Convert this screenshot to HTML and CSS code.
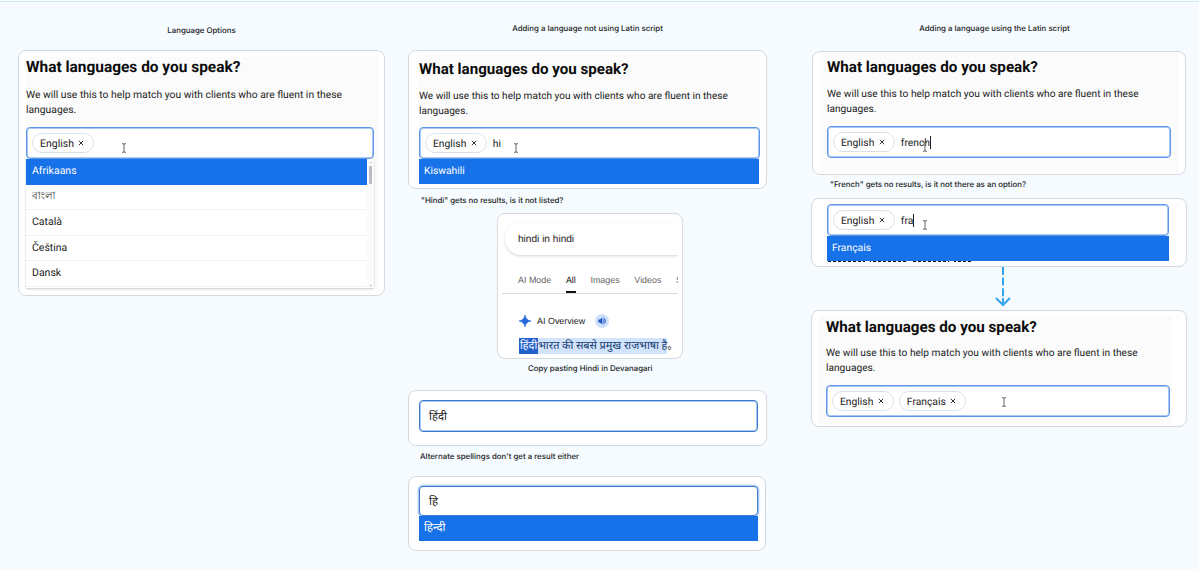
FILE: index.html
```html
<!DOCTYPE html>
<html lang="en">

<head>
    <meta charset="UTF-8">
    <meta name="viewport" content="width=device-width, initial-scale=1.0">
    <title>Language Options</title>
    <link rel="stylesheet" href="styles.css">
</head>

<body>
    <svg class="defs" width="0" height="0">
        <symbol id="ibeam" viewBox="0 0 6 10">
            <path d="M1 .7h1.2q.8 0 .8.8v7q0 .8-.8.8H1M5 .7H3.8q-.8 0-.8.8M5 9.3H3.8q-.8 0-.8-.8" fill="none" stroke="#555" stroke-width=".9" />
        </symbol>
        <symbol id="close" viewBox="0 0 6 6">
            <path d="M.8.8l4.4 4.4M5.2.8L.8 5.2" fill="none" stroke="#333" stroke-width="1" />
        </symbol>
    </svg>

    <main class="board">
        <section class="column column-options">
            <h1 class="caption">Language Options</h1>
            <div class="card card-options">
                <div class="panel">
                    <h2>What languages do you speak?</h2>
                    <p>We will use this to help match you with clients who are fluent in these languages.</p>
                    <div class="field">
                        <span class="tag">English <svg><use href="#close" /></svg></span>
                        <svg class="ibeam"><use href="#ibeam" /></svg>
                    </div>
                    <div class="dropdown">
                        <ul class="list">
                            <li class="active">Afrikaans</li>
                            <li class="bengali">বাংলা</li>
                            <li>Català</li>
                            <li>Čeština</li>
                            <li>Dansk</li>
                        </ul>
                        <div class="scrollbar">
                            <i class="arrow up"></i>
                            <i class="thumb"></i>
                            <i class="arrow down"></i>
                        </div>
                    </div>
                </div>
            </div>
        </section>

        <section class="column column-other">
            <h1 class="caption">Adding a language not using Latin script</h1>
            <div class="card card-hi">
                <div class="panel">
                    <h2>What languages do you speak?</h2>
                    <p>We will use this to help match you with clients who are fluent in these languages.</p>
                    <div class="field">
                        <span class="tag">English <svg><use href="#close" /></svg></span>
                        <span class="typed">hi</span>
                        <svg class="ibeam"><use href="#ibeam" /></svg>
                    </div>
                    <div class="option active">Kiswahili</div>
                </div>
            </div>
            <p class="note note-hi">"Hindi" gets no results, is it not listed?</p>
            <div class="card search">
                <div class="search-bar">hindi in hindi</div>
                <div class="tabs">
                    <span>AI Mode</span>
                    <span class="selected">All</span>
                    <span>Images</span>
                    <span>Videos</span>
                    <span>S</span>
                </div>
                <div class="overview">
                    <svg class="spark" viewBox="0 0 12 12"><path d="M6 0Q6.8 5.2 12 6Q6.8 6.8 6 12Q5.2 6.8 0 6Q5.2 5.2 6 0Z" fill="#2b6be0" stroke="#2b6be0" stroke-width=".6" /></svg>
                    <span>AI Overview</span>
                    <svg class="speaker" viewBox="0 0 14 14">
                        <circle cx="7" cy="7" r="7" fill="#cfe0fc" />
                        <path d="M3.3 5.6h1.6L7.3 3.5v7L4.9 8.4H3.3z" fill="#1b56c4" />
                        <path d="M8.3 5.2q1.4 1.8 0 3.6M8.6 3.6q3.6 3.4 0 6.8" fill="none" stroke="#1b56c4" stroke-width=".9" />
                    </svg>
                </div>
                <div class="answer"><mark>हिंदी</mark><span>भारत की सबसे प्रमुख राजभाषा है</span>。</div>
            </div>
            <p class="note note-copy">Copy pasting Hindi in Devanagari</p>
            <div class="card card-paste">
                <div class="field">हिंदी</div>
            </div>
            <p class="note note-alt">Alternate spellings don't get a result either</p>
            <div class="card card-match">
                <div class="field">हि</div>
                <div class="option active">हिन्दी</div>
            </div>
        </section>

        <section class="column column-latin">
            <h1 class="caption">Adding a language using the Latin script</h1>
            <div class="card card-french">
                <div class="panel">
                    <h2>What languages do you speak?</h2>
                    <p>We will use this to help match you with clients who are fluent in these languages.</p>
                    <div class="field">
                        <span class="tag">English <svg><use href="#close" /></svg></span>
                        <span class="typed caret">french</span>
                        <svg class="ibeam"><use href="#ibeam" /></svg>
                    </div>
                </div>
            </div>
            <p class="note note-french">"French" gets no results, is it not there as an option?</p>
            <div class="card card-fra">
                <div class="field">
                    <span class="tag">English <svg><use href="#close" /></svg></span>
                    <span class="typed caret">fra</span>
                    <svg class="ibeam"><use href="#ibeam" /></svg>
                </div>
                <div class="option active">Français</div>
                <div class="covered"></div>
            </div>
            <svg class="flow-arrow" viewBox="0 0 16 42">
                <path d="M8 0V34" stroke-dasharray="8 2.6" />
                <path d="M8 31V37.5M1 31L8 38L15 31" />
            </svg>
            <div class="card card-done">
                <div class="panel">
                    <h2>What languages do you speak?</h2>
                    <p>We will use this to help match you with clients who are fluent in these languages.</p>
                    <div class="field">
                        <span class="tag">English <svg><use href="#close" /></svg></span>
                        <span class="tag">Français <svg><use href="#close" /></svg></span>
                        <svg class="ibeam"><use href="#ibeam" /></svg>
                    </div>
                </div>
            </div>
        </section>
    </main>
</body>

</html>
```

FILE: styles.css
```css
* {
    box-sizing: border-box;
}

body {
    margin: 0;
    height: 569px;
    overflow: hidden;
    background-color: #f5fbff;
    color: #222;
    font-family: Roboto, "Noto Sans", sans-serif;
    font-size: 10.3px;
    text-rendering: geometricPrecision;
}

h1,
h2,
p,
ul {
    margin: 0;
    padding: 0;
}

.defs {
    position: absolute;
}

.board {
    display: flex;
    align-items: flex-start;
    height: 569px;
    margin-top: 1px;
    padding-left: 18px;
    border-top: 1px solid #cbe9ee;
}

.column {
    display: flex;
    flex-direction: column;
}

.column-options {
    width: 367px;
    margin-right: 23px;
}

.column-other {
    width: 359px;
    margin-right: 44px;
}

.column-latin {
    width: 376px;
}

.caption,
.note {
    color: #222;
    font-family: Inter, sans-serif;
    font-size: 7.85px;
    font-weight: 500;
    line-height: 12px;
}

.caption {
    height: 28px;
    margin-top: 20px;
    text-align: center;
}

.column-options .caption {
    height: 26px;
    margin-top: 22px;
}

.column-latin .caption {
    margin-right: 9px;
}

.card {
    border: 1px solid #d5d9de;
    border-radius: 8px;
    background-color: #fff;
    overflow: hidden;
}

.panel {
    background-color: #fbfbfb;
}

h2 {
    color: #0c0c0c;
    font-size: 15.2px;
    font-weight: 700;
    line-height: 20px;
    white-space: nowrap;
}

.panel p {
    height: 30px;
    font-size: 10.18px;
    line-height: 15px;
}

.field {
    display: flex;
    align-items: center;
    height: 32px;
    padding-left: 5px;
    border: 1px solid #5c97e6;
    border-radius: 4px;
    background-color: #fff;
    box-shadow: inset 0 0 0 1px #a9c9f3;
}

.tag {
    display: flex;
    align-items: center;
    height: 20px;
    padding: 0 9px 0 7px;
    border: 1px solid #dcdfe6;
    border-radius: 10px;
}

.tag svg {
    width: 6px;
    height: 6px;
    margin-left: 4.5px;
}

.tag + .tag {
    margin-left: 5px;
}

.typed {
    margin-left: 6px;
}

.caret {
    border-right: 1px solid #222;
}

.ibeam {
    width: 6px;
    height: 10px;
}

.active {
    background-color: #1771e9;
    color: #fff;
}

.option {
    height: 25px;
    padding-left: 5px;
    line-height: 24px;
}

/* language options */

.card-options {
    height: 246px;
    padding: 6px 6px 0 7px;
}

.card-options .panel {
    height: 232px;
    padding-top: 1px;
    font-size: 10.5px;
}

.card-options h2 {
    font-size: 15.45px;
    line-height: 19px;
}

.card-options p {
    margin: 10px 0;
    font-size: 10.32px;
}

.card-options .field {
    width: 348px;
}

.card-options .ibeam {
    margin: 9px 0 0 27px;
}

.dropdown {
    display: flex;
    width: 348px;
    height: 129px;
    background-color: #fff;
    box-shadow: 0 1px 2px #c8c8c8;
}

.list {
    width: 341px;
    list-style: none;
}

.list li {
    height: 25.5px;
    padding-left: 6px;
    border-bottom: 1px solid #f2f2f2;
    line-height: 24px;
}

.list .active {
    border-color: #1771e9;
}

.list .bengali {
    font-size: 10.2px;
    font-weight: 500;
}

.scrollbar {
    display: flex;
    flex-direction: column;
    align-items: center;
    width: 7px;
    padding: 3px 0 2px;
    background-color: #fafafa;
}

.arrow {
    border: 1.5px solid transparent;
}

.up {
    border-top: 0;
    border-bottom-color: #888;
}

.down {
    margin-top: auto;
    border-bottom: 0;
    border-top-color: #888;
}

.thumb {
    width: 3px;
    height: 18px;
    margin-top: 3px;
    border-radius: 1px;
    background-color: #b9bcc4;
}

/* other scripts */

.card-hi {
    height: 139px;
    padding: 3px 6px 0 10px;
}

.card-hi .panel {
    height: 131px;
    padding-top: 6px;
}

.card-hi h2 {
    font-size: 15.1px;
    line-height: 19px;
}

.card-hi p {
    margin: 10px 0 8px;
    font-size: 10.08px;
}

.card-hi .field {
    width: 341px;
}

.card-hi .ibeam {
    margin: 9px 0 0 12px;
}

.card-hi .option {
    width: 340px;
}

.note-hi {
    margin: 5px 0 7px 13px;
}

.search {
    width: 186px;
    height: 146px;
    margin-left: 89px;
    padding: 9px 4px 0;
    font-family: "Liberation Sans", sans-serif;
    font-size: 8.95px;
}

.search-bar {
    height: 32px;
    margin-left: 3px;
    padding-left: 13px;
    border-radius: 17px 0 0 17px;
    box-shadow: 0 1px 3px #d4d4d4;
    clip-path: inset(-3px 0 -5px -4px);
    font-size: 10.1px;
    line-height: 33px;
}

.tabs {
    display: flex;
    gap: 14.6px;
    height: 28px;
    margin-top: 11px;
    padding-left: 16px;
    border-bottom: 1px solid #dcdcdc;
    overflow: hidden;
    color: #666;
    line-height: 28px;
    white-space: nowrap;
}

.selected {
    border-bottom: 2px solid #111;
    color: #111;
}

.overview {
    display: flex;
    align-items: center;
    height: 14px;
    margin: 20px 0 0 17px;
}

.spark {
    width: 12px;
    height: 12px;
    margin-right: 6px;
}

.speaker {
    width: 14px;
    height: 14px;
    margin-left: 10px;
}

.answer {
    display: flex;
    height: 16px;
    margin: 10px 0 0 17px;
    font-family: Roboto, "Noto Sans", "Noto Sans CJK SC", sans-serif;
    font-size: 10.9px;
    line-height: 16px;
    white-space: nowrap;
}

.answer mark {
    padding: 0 1px;
    background-color: #2460c9;
    color: #fff;
}

.answer span {
    background-color: #d2e3fc;
    color: #123a70;
}

.note-copy {
    margin: 3px 0 16px 120px;
}

.card-paste {
    height: 56px;
    padding: 9px 8px 0 10px;
}

.card-paste .field,
.card-match .field {
    padding-left: 9px;
    border-color: #3e7bcc;
    font-size: 11.3px;
}

.note-alt {
    margin: 4px 0 14px 12px;
}

.card-match {
    width: 358px;
    height: 75px;
    padding: 9px 7px 0 10px;
}

.card-match .field {
    height: 30px;
    box-shadow: 0 0 2px 1px #8db8f0;
}

.card-match .option {
    position: relative;
    font-size: 11.3px;
}

/* latin script */

.card-french {
    width: 374px;
    height: 124px;
    margin: 1px 0 0 1px;
    padding: 0 6px 0 7px;
}

.card-french .panel {
    height: 120px;
    padding: 5px 0 0 7px;
}

.card-french p {
    margin: 10px 0 9px;
}

.card-french h2 {
    line-height: 20px;
}

.card-french .field {
    width: 344px;
}

.card-french .ibeam {
    margin: 9px 0 0 -9px;
}

.note-french {
    margin: 3px 0 8px 19px;
}

.card-fra {
    height: 69px;
    padding: 5px 17px 0 15px;
}

.card-fra .ibeam {
    margin: 9px 0 0 8px;
}

.card-fra .option {
    width: 342px;
}

/* feet of the heading hidden behind the option */
.covered {
    width: 144px;
    height: 1px;
    margin-left: 1px;
    background-image: repeating-linear-gradient(90deg, transparent 0 37px, #fff 37px 42px), repeating-linear-gradient(90deg, #111 0 3px, #fff 3px 5px);
}

.flow-arrow {
    width: 16px;
    height: 42px;
    margin-left: 184px;
    fill: none;
    stroke: #36a5ee;
    stroke-width: 2;
}

.card-done {
    height: 117px;
    margin-top: 1px;
    padding: 5px 14px 0 7px;
}

.card-done .panel {
    height: 108px;
    padding: 1px 0 0 7px;
}

.card-done p {
    margin: 9px 0 9px;
}

.card-done .field {
    width: 344px;
}

.card-done .ibeam {
    margin: 2px 0 0 35px;
}
```
